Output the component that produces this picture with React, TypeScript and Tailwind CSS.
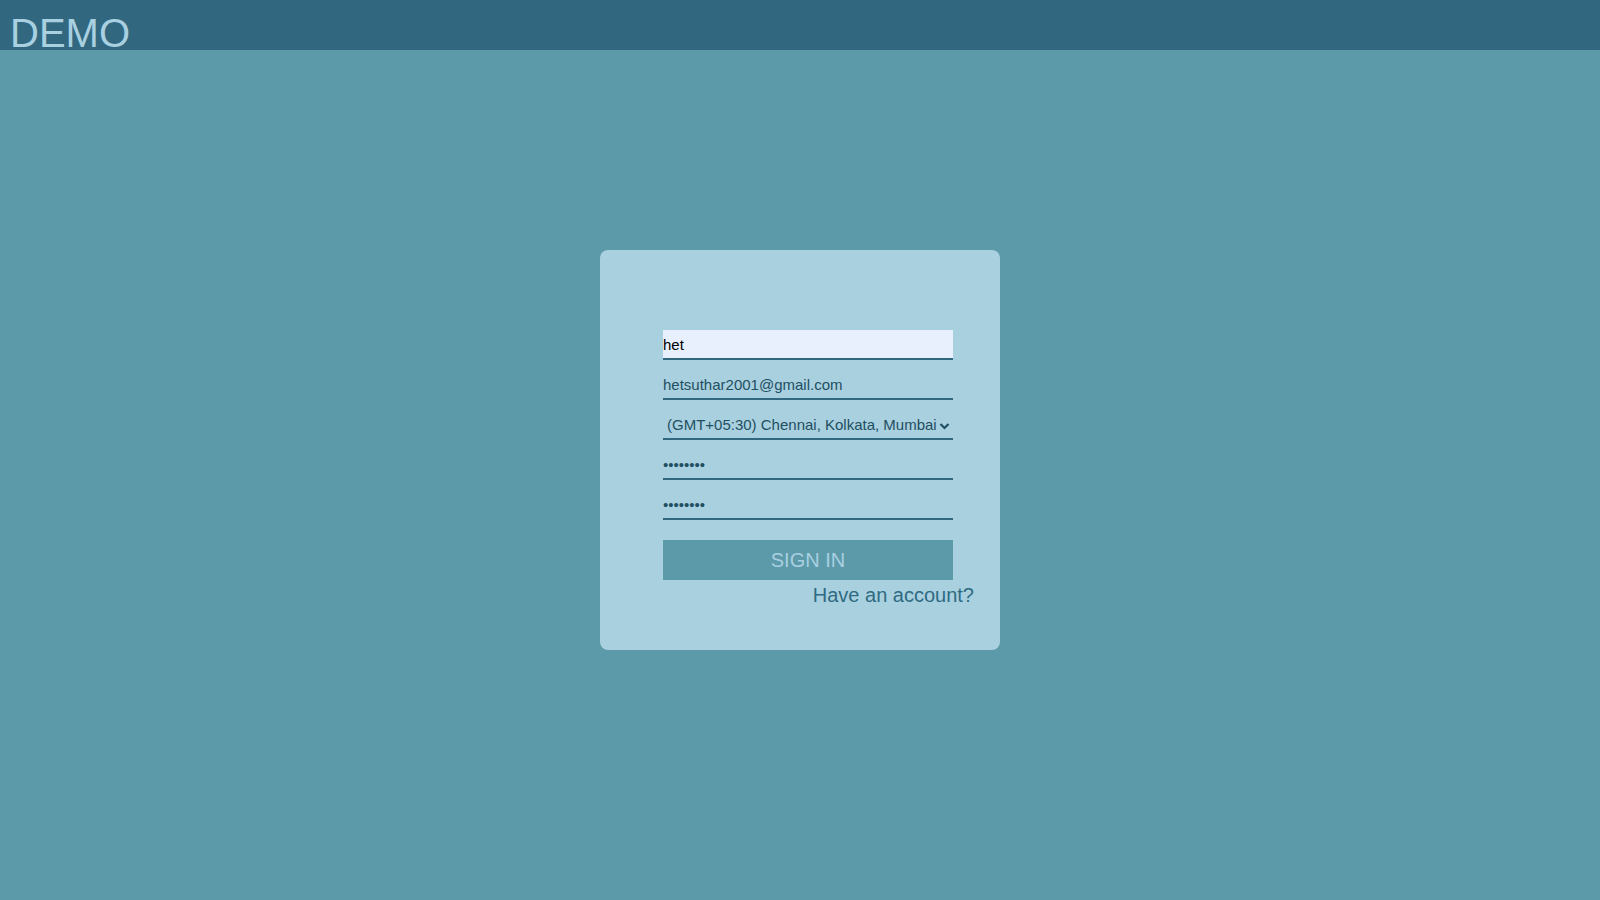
import React from "react";

export default function App() {
  return (
    <div className="min-h-screen bg-[#5c99a9] relative" style={{ fontFamily: '"Liberation Sans", Arial, sans-serif' }}>
      <header className="h-[50px] bg-[#316880] px-[10px] flex items-end">
        <h1 className="text-[40px] leading-[40px] text-[#a8d0e0] relative top-[3px]">DEMO</h1>
      </header>
      <div className="absolute inset-0 flex items-center justify-center pointer-events-none">
        <div className="w-[400px] h-[400px] bg-[#a9d0df] rounded-[8px] pt-[80px] pl-[63px] pr-[47px] pointer-events-auto">
          <form className="flex flex-col gap-[10px]" onSubmit={(e) => e.preventDefault()}>
            <input
              defaultValue="het"
              className="h-[30px] w-full bg-[#e8f0fe] text-black text-[15px] border-b-2 border-[#316880] outline-none pt-[1px]"
            />
            <input
              defaultValue="hetsuthar2001@gmail.com"
              className="h-[30px] w-full bg-transparent text-[#1e4f62] text-[15px] border-b-2 border-[#316880] outline-none pt-[1px]"
            />
            <div className="h-[30px] w-full border-b-2 border-[#316880] flex items-end pb-[2px] pl-[4px] pr-[3px] text-[15px] text-[#1e4f62]">
              <span className="flex-1 whitespace-nowrap overflow-hidden">(GMT+05:30) Chennai, Kolkata, Mumbai</span>
              <svg width="11" height="10" viewBox="0 0 11 10" className="shrink-0 mb-[5px]">
                <path d="M1.5 3 L5.5 7 L9.5 3" fill="none" stroke="#1e4f62" strokeWidth="2.2" />
              </svg>
            </div>
            <input
              type="password"
              defaultValue="password"
              className="h-[30px] w-full bg-transparent text-[#1e4f62] text-[15px] border-b-2 border-[#316880] outline-none"
            />
            <input
              type="password"
              defaultValue="password"
              className="h-[30px] w-full bg-transparent text-[#1e4f62] text-[15px] border-b-2 border-[#316880] outline-none"
            />
            <button
              type="submit"
              className="mt-[10px] h-[40px] w-full bg-[#5c99a9] text-[#a8d0e0] text-[20px]"
            >
              SIGN IN
            </button>
          </form>
          <div className="flex justify-end -mr-[21px]">
            <span className="text-[20px] text-[#2f6b82]">Have an account?</span>
          </div>
        </div>
      </div>
    </div>
  );
}
